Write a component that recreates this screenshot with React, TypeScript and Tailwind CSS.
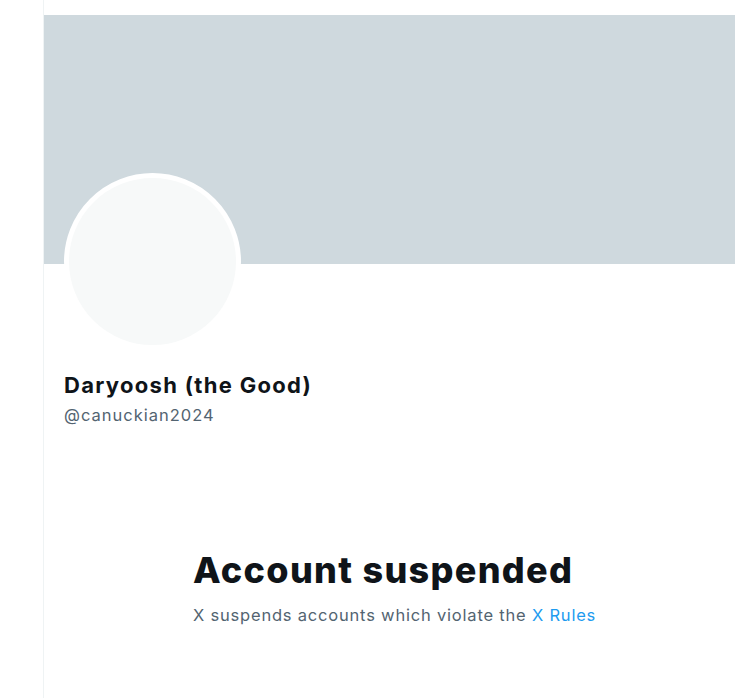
import React from "react";

export default function App() {
  return (
    <div className="flex min-h-[698px] bg-white font-['Inter',sans-serif] text-[#0f1419]">
      <div className="w-[43px] shrink-0" />
      <main className="flex-1 border-l border-[#eff3f4] pt-[15px]">
        {/* Banner */}
        <div className="h-[249px] bg-[#cfd9de]" />

        {/* Profile header */}
        <div className="px-[20px]">
          <div className="-mt-[91px] h-[177px] w-[177px] rounded-full border-[5px] border-white bg-[#f7f9f9]" />
          <div className="mt-[21px]">
            <h1 className="text-[22px] font-bold leading-[28px] tracking-[1.3px]">Daryoosh (the Good)</h1>
            <div className="mt-[5px] text-[16.5px] leading-[22px] tracking-[1px] text-[#536471]">@canuckian2024</div>
          </div>
        </div>

        {/* Suspended notice */}
        <div className="mt-[122px] pl-[149px]">
          <h2 className="text-[36px] font-extrabold leading-[44px] tracking-[1.3px]">Account suspended</h2>
          <p className="mt-[12px] text-[16.5px] leading-[22px] tracking-[0.8px] text-[#536471]">
            X suspends accounts which violate the <span className="text-[#1d9bf0]">X Rules</span>
          </p>
        </div>
      </main>
    </div>
  );
}
